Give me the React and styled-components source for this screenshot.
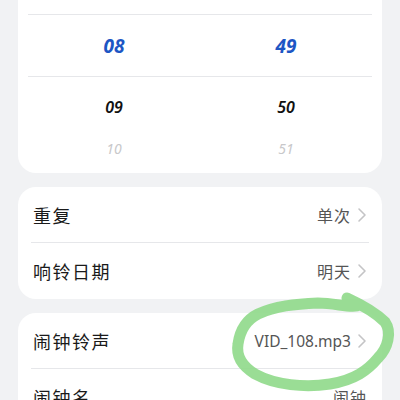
import React from "react";
import styled, { createGlobalStyle } from "styled-components";

const Global = createGlobalStyle`
  html, body { margin: 0; padding: 0; background: #f1f2f4; }
  body { font-family: "Noto Sans", "Noto Sans CJK SC", sans-serif; overflow: hidden; }
`;

const Page = styled.div`
  position: relative;
  width: 400px;
  height: 400px;
  overflow: hidden;
  padding: 0 18px;
  box-sizing: border-box;
  display: flex;
  flex-direction: column;
  gap: 14px;
`;

const Card = styled.div`
  background: #ffffff;
  border-radius: 18px;
  overflow: hidden;
  flex-shrink: 0;
`;

const WheelCard = styled(Card)`
  margin-top: -40px;
  padding: 0 10px 13px;
`;

const WheelRow = styled.div`
  display: grid;
  grid-template-columns: 1fr 1fr;
  height: ${(p) => p.$h}px;
  align-items: center;
  border-top: ${(p) => (p.$line ? "1px solid #e6e7ea" : "none")};
  box-sizing: border-box;
`;

const Digit = styled.span`
  text-align: center;
  font-size: ${(p) => p.$size}px;
  font-weight: ${(p) => p.$weight};
  color: ${(p) => p.$color};
  font-style: italic;
`;

const Row = styled.div`
  height: 56px;
  display: flex;
  align-items: center;
  justify-content: space-between;
  padding: 0 15px;
  position: relative;
  &::after {
    content: "";
    display: ${(p) => (p.$last ? "none" : "block")};
    position: absolute;
    left: 13px;
    right: 13px;
    bottom: 0;
    height: 1px;
    background: #e6e7ea;
  }
`;

const Label = styled.span`
  font-family: "Noto Sans CJK SC", sans-serif;
  font-size: 18px;
  letter-spacing: 1.5px;
  color: #1a1a1a;
`;

const Value = styled.span`
  display: flex;
  align-items: center;
  gap: 6px;
  font-family: "Noto Sans", "Noto Sans CJK SC", sans-serif;
  font-size: ${(p) => (p.$latin ? 15.5 : 16)}px;
  color: #555;
  letter-spacing: ${(p) => (p.$latin ? 0 : 1)}px;
`;

const Chevron = () => (
  <svg width="10" height="16" viewBox="0 0 10 16">
    <path d="M2 2 L8 8 L2 14" fill="none" stroke="#c4c4c6" strokeWidth="1.6" strokeLinecap="round" strokeLinejoin="round" />
  </svg>
);

const Scribble = styled.svg`
  position: absolute;
  left: 0;
  top: 0;
  pointer-events: none;
`;

export default function App() {
  return (
    <>
      <Global />
      <Page>
        <WheelCard>
          <WheelRow $h={54} />
          <WheelRow $h={62} $line>
            <Digit $size={19} $weight={700} $color="#1d56c4">08</Digit>
            <Digit $size={19} $weight={700} $color="#1d56c4">49</Digit>
          </WheelRow>
          <WheelRow $h={60} $line>
            <Digit $size={16} $weight={600} $color="#111">09</Digit>
            <Digit $size={16} $weight={600} $color="#111">50</Digit>
          </WheelRow>
          <WheelRow $h={24}>
            <Digit $size={14} $weight={400} $color="#c8c8ca">10</Digit>
            <Digit $size={14} $weight={400} $color="#c8c8ca">51</Digit>
          </WheelRow>
        </WheelCard>
        <Card>
          <Row>
            <Label>重复</Label>
            <Value>单次<Chevron /></Value>
          </Row>
          <Row $last>
            <Label>响铃日期</Label>
            <Value>明天<Chevron /></Value>
          </Row>
        </Card>
        <Card>
          <Row>
            <Label>闹钟铃声</Label>
            <Value $latin>VID_108.mp3<Chevron /></Value>
          </Row>
          <Row $last>
            <Label>闹钟名</Label>
            <Value>闹钟</Value>
          </Row>
        </Card>
        <Scribble width="400" height="400" viewBox="0 0 400 400">
          <path
            d="M347 298 C360 304 375 312 385 322 C392 332 388 348 378 358 C368 370 355 380 330 384 C305 388 275 385 255 374 C242 366 236 356 238 344 C240 330 246 320 258 314 C275 306 295 304 318 303 C335 303 348 308 357 306"
            fill="none"
            stroke="#8fd98a"
            strokeOpacity="0.9"
            strokeWidth="11"
            strokeLinecap="round"
            strokeLinejoin="round"
          />
        </Scribble>
      </Page>
    </>
  );
}
